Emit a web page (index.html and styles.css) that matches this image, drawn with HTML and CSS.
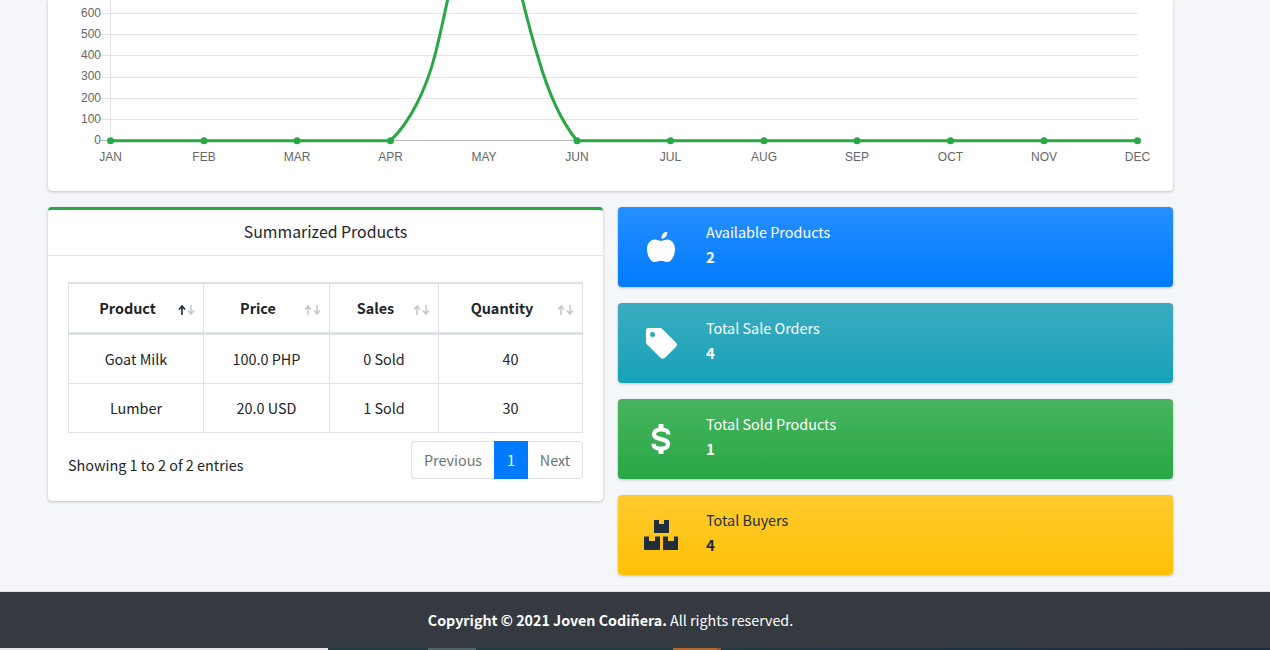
FILE: index.html
```html
<!DOCTYPE html>
<html lang="en">
<head>
<meta charset="utf-8">
<title>Dashboard</title>
<link rel="stylesheet" href="styles.css">
</head>
<body>
<main class="content">
  <section class="card chart-card">
    <svg class="chart" width="1125" height="191" viewBox="0 0 1125 191">
      <g class="grid">
        <line x1="53" x2="1090" y1="13.5" y2="13.5"/>
        <line x1="53" x2="1090" y1="34.5" y2="34.5"/>
        <line x1="53" x2="1090" y1="55.5" y2="55.5"/>
        <line x1="53" x2="1090" y1="77.5" y2="77.5"/>
        <line x1="53" x2="1090" y1="98.5" y2="98.5"/>
        <line x1="53" x2="1090" y1="119.5" y2="119.5"/>
        <line x1="62.5" x2="62.5" y1="0" y2="141"/>
      </g>
      <line class="axis" x1="53" x2="1090" y1="140.5" y2="140.5"/>
      <g class="ylabels">
        <text x="53" y="17">600</text>
        <text x="53" y="38">500</text>
        <text x="53" y="59">400</text>
        <text x="53" y="80">300</text>
        <text x="53" y="102">200</text>
        <text x="53" y="123">100</text>
        <text x="53" y="144">0</text>
      </g>
      <g class="xlabels">
        <text x="62.5" y="161">JAN</text>
        <text x="156" y="161">FEB</text>
        <text x="249" y="161">MAR</text>
        <text x="342.5" y="161">APR</text>
        <text x="436" y="161">MAY</text>
        <text x="529" y="161">JUN</text>
        <text x="622.5" y="161">JUL</text>
        <text x="716" y="161">AUG</text>
        <text x="809" y="161">SEP</text>
        <text x="902.5" y="161">OCT</text>
        <text x="996" y="161">NOV</text>
        <text x="1089.5" y="161">DEC</text>
      </g>
      <path class="line" d="M62.500 140.700H342.500C362 122 378 90 387 55C392 36 396 16 400 -2M474 -2C479 18 484 38 490 57C500 92 512 120 529 140.700H1089.500"/>
      <g class="dots">
        <circle cx="62.500" cy="140.700" r="3.500"/>
        <circle cx="156" cy="140.700" r="3.500"/>
        <circle cx="249" cy="140.700" r="3.500"/>
        <circle cx="342.500" cy="140.700" r="3.500"/>
        <circle cx="529" cy="140.700" r="3.500"/>
        <circle cx="622.500" cy="140.700" r="3.500"/>
        <circle cx="716" cy="140.700" r="3.500"/>
        <circle cx="809" cy="140.700" r="3.500"/>
        <circle cx="902.500" cy="140.700" r="3.500"/>
        <circle cx="996" cy="140.700" r="3.500"/>
        <circle cx="1089.500" cy="140.700" r="3.500"/>
      </g>
    </svg>
  </section>

  <div class="columns">
    <section class="card table-card">
      <h3 class="card-title">Summarized Products</h3>
      <div class="card-body">
        <table class="data-table">
          <colgroup>
            <col class="c1"><col class="c2"><col class="c3"><col class="c4">
          </colgroup>
          <thead>
            <tr>
              <th><span class="th-label">Product</span><svg class="sort" width="17" height="10" viewBox="0 0 17 10"><path class="up on" d="M4 10V1M1 4.500L4 1l3 3.500"/><path class="down" d="M13 0v9M10 5.500L13 9l3-3.500"/></svg></th>
              <th><span class="th-label">Price</span><svg class="sort" width="17" height="10" viewBox="0 0 17 10"><path class="up" d="M4 10V1M1 4.500L4 1l3 3.500"/><path class="down" d="M13 0v9M10 5.500L13 9l3-3.500"/></svg></th>
              <th><span class="th-label">Sales</span><svg class="sort" width="17" height="10" viewBox="0 0 17 10"><path class="up" d="M4 10V1M1 4.500L4 1l3 3.500"/><path class="down" d="M13 0v9M10 5.500L13 9l3-3.500"/></svg></th>
              <th><span class="th-label">Quantity</span><svg class="sort" width="17" height="10" viewBox="0 0 17 10"><path class="up" d="M4 10V1M1 4.500L4 1l3 3.500"/><path class="down" d="M13 0v9M10 5.500L13 9l3-3.500"/></svg></th>
            </tr>
          </thead>
          <tbody>
            <tr><td>Goat Milk</td><td>100.0 PHP</td><td>0 Sold</td><td>40</td></tr>
            <tr><td>Lumber</td><td>20.0 USD</td><td>1 Sold</td><td>30</td></tr>
          </tbody>
        </table>
        <div class="table-foot">
          <div class="info">Showing 1 to 2 of 2 entries</div>
          <nav class="pager">
            <span class="page prev">Previous</span>
            <span class="page active">1</span>
            <span class="page next">Next</span>
          </nav>
        </div>
      </div>
    </section>

    <div class="stats">
      <article class="stat blue">
        <span class="stat-icon">
          <svg width="28" height="32" viewBox="0 0 28 32"><path fill="currentColor" d="M20.400 8.600c-2.300 0-4.100 1.300-6.400 1.300s-4-1.300-6.400-1.300C3.800 8.600 0 12.200 0 18.200 0 25 4.100 31 7.400 31c2.300 0 3.900-1.300 6.600-1.300s4.300 1.300 6.600 1.300C23.900 31 28 25 28 18.200c0-6-3.800-9.600-7.600-9.600zM14.600 7.900C18.200 7.700 20.600 4.600 20.200.8 17.100.9 14.100 3.600 14.600 7.900z"/></svg>
        </span>
        <div class="stat-text"><span class="stat-label">Available Products</span><b class="stat-num">2</b></div>
      </article>
      <article class="stat teal">
        <span class="stat-icon">
          <svg width="32" height="32" viewBox="0 0 32 32"><path fill="currentColor" fill-rule="evenodd" d="M1 3.500C1 2 2 1 3.500 1h11.700c.8 0 1.500.3 2.100.9l13.800 13.800c1.100 1.100 1.100 2.900 0 4L19.700 31c-1.100 1.100-2.900 1.100-4 0L1.900 17.200C1.300 16.600 1 15.900 1 15.100zM7.500 5A2.500 2.500 0 1 0 7.500 10 2.500 2.500 0 0 0 7.500 5z"/></svg>
        </span>
        <div class="stat-text"><span class="stat-label">Total Sale Orders</span><b class="stat-num">4</b></div>
      </article>
      <article class="stat green">
        <span class="stat-icon">
          <svg width="20" height="32" viewBox="0 0 20 32"><path fill="none" stroke="currentColor" stroke-width="4.200" d="M17.500 11.500C17.500 8 14.500 6.500 10 6.500 5.500 6.500 3 8.300 3 11.200c0 6.500 14 3.300 14 9.800 0 3-2.500 4.700-7 4.700-4.500 0-7.500-1.600-7.500-5"/><path fill="currentColor" d="M7.500 1h5v6h-5zM7.500 25h5v6h-5z"/></svg>
        </span>
        <div class="stat-text"><span class="stat-label">Total Sold Products</span><b class="stat-num">1</b></div>
      </article>
      <article class="stat yellow">
        <span class="stat-icon">
          <svg width="36" height="32" viewBox="0 0 36 32"><path fill="currentColor" fill-rule="evenodd" d="M11 1h5v4h5V1h5v13H11zM1 17.500h5V22h6v-4.500h5V31H1zM20 17.500h5V22h6v-4.500h4V31H20z"/></svg>
        </span>
        <div class="stat-text"><span class="stat-label">Total Buyers</span><b class="stat-num">4</b></div>
      </article>
    </div>
  </div>
</main>
<footer class="footer">
  <p class="copy"><strong>Copyright © 2021 Joven Codiñera.</strong> All rights reserved.</p>
  <div class="strip">
    <span class="seg seg-light"></span>
    <span class="seg seg-dark-a"></span>
    <span class="seg seg-mid"></span>
    <span class="seg seg-dark-b"></span>
    <span class="seg seg-orange"></span>
    <span class="seg seg-orange-end"></span>
    <span class="seg seg-dark-c"></span>
  </div>
</footer>
</body>
</html>
```
FILE: styles.css
```css
html, body { margin: 0; padding: 0; }
body {
  width: 1270px;
  height: 650px;
  overflow: hidden;
  background: #f4f6f9;
  color: #212529;
  font-family: "Noto Sans CJK SC", "Noto Sans", sans-serif;
  font-size: 14.4px;
  line-height: 24px;
}
.content { padding: 0 97px 0 48px; height: 591px; box-sizing: border-box; }
.card {
  background: #fff;
  border-radius: 4px;
  box-shadow: 0 0 1px rgba(0,0,0,.125), 0 1px 3px rgba(0,0,0,.2);
}
.chart-card { height: 191px; border-radius: 0 0 4px 4px; }
.chart { display: block; overflow: hidden; }
.grid line { stroke: #e3e3e3; stroke-width: 1; }
.axis { stroke: #b5b5b5; stroke-width: 1; }
.ylabels text, .xlabels text {
  font-family: "Liberation Sans", Arial, sans-serif;
  font-size: 12px;
  fill: #666;
}
.ylabels text { text-anchor: end; }
.xlabels text { text-anchor: middle; }
.line { fill: none; stroke: #28a745; stroke-width: 3; }
.dots circle { fill: #28a745; }

.columns { display: grid; grid-template-columns: 555px 555px; column-gap: 15px; margin-top: 16px; align-items: start; }

.table-card { border-top: 3px solid #28a745; height: 294px; box-sizing: border-box; }
.card-title {
  margin: 0;
  height: 46px;
  line-height: 43px;
  font-size: 15.84px;
  font-weight: 400;
  text-align: center;
  border-bottom: 1px solid #dee2e6;
  box-sizing: border-box;
}
.card-body { padding: 26px 20px 0; }
.data-table {
  width: 514px;
  table-layout: fixed;
  border-collapse: collapse;
  border: 1px solid #dee2e6;
  border-top-width: 2px;
}
.c1 { width: 135px; } .c2 { width: 126px; } .c3 { width: 109px; } .c4 { width: 144px; }
.data-table th, .data-table td { border: 1px solid #dee2e6; text-align: center; padding: 0; }
.data-table th { height: 48px; border-bottom-width: 3px; font-weight: 700; position: relative; }
.th-label { display: inline-block; padding-right: 17px; }
.data-table td { height: 48px; }
.sort { position: absolute; right: 8px; top: 21px; display: block; }
.sort path { fill: none; stroke: #c6c8ca; stroke-width: 1.6; }
.sort .on { stroke: #1f2d3d; }

.table-foot { display: flex; justify-content: space-between; align-items: flex-start; margin-top: 8px; }
.info { padding-top: 12px; }
.pager { display: flex; height: 38px; }
.page {
  display: flex;
  align-items: center;
  justify-content: center;
  box-sizing: border-box;
  border: 1px solid #dee2e6;
  color: #6c757d;
  background: #fff;
}
.prev { width: 83px; border-radius: 4px 0 0 4px; border-right: 0; }
.active { width: 34px; background: #007bff; border-color: #007bff; color: #fff; }
.next { width: 55px; border-radius: 0 4px 4px 0; border-left: 0; }

.stats { display: flex; flex-direction: column; gap: 16px; }
.stat {
  height: 80px;
  display: flex;
  align-items: center;
  border-radius: 4px;
  color: #fff;
  box-shadow: 0 0 1px rgba(0,0,0,.125), 0 1px 3px rgba(0,0,0,.2);
}
.stat-icon { width: 86px; height: 80px; margin-right: 2px; display: flex; align-items: center; justify-content: center; flex: none; }
.stat-icon svg { display: block; }
.stat-text { display: flex; flex-direction: column; padding-bottom: 6px; }
.stat-label { line-height: 24px; }
.stat-num { line-height: 25px; font-weight: 700; font-size: 15px; }
.blue { background: linear-gradient(180deg, #268fff, #007bff); }
.teal { background: linear-gradient(180deg, #3babc0, #17a2b8); }
.green { background: linear-gradient(180deg, #48b461, #28a745); }
.yellow { background: linear-gradient(180deg, #ffca2c, #ffc107); color: #1f2d3d; }

.footer { height: 59px; box-sizing: border-box; background: #343a40; border-top: 1px solid #dee2e6; color: #fff; text-align: center; display: flex; flex-direction: column; }
.copy { margin: 0; padding-top: 16px; padding-right: 49px; height: 56px; box-sizing: border-box; font-size: 14.28px; }
.strip { display: flex; height: 2px; flex: none; }
.seg { display: block; height: 2px; }
.seg-light { width: 328px; background: #e6e6e6; }
.seg-dark-a { width: 100px; background: #1f3a42; }
.seg-mid { width: 48px; background: #4f6468; }
.seg-dark-b { width: 197px; background: #1f3a42; }
.seg-orange { width: 44px; background: #b0682f; }
.seg-orange-end { width: 4px; background: #8e5a2e; }
.seg-dark-c { flex: 1; background: linear-gradient(90deg, #1f3a42, #1b2a40); }
```
